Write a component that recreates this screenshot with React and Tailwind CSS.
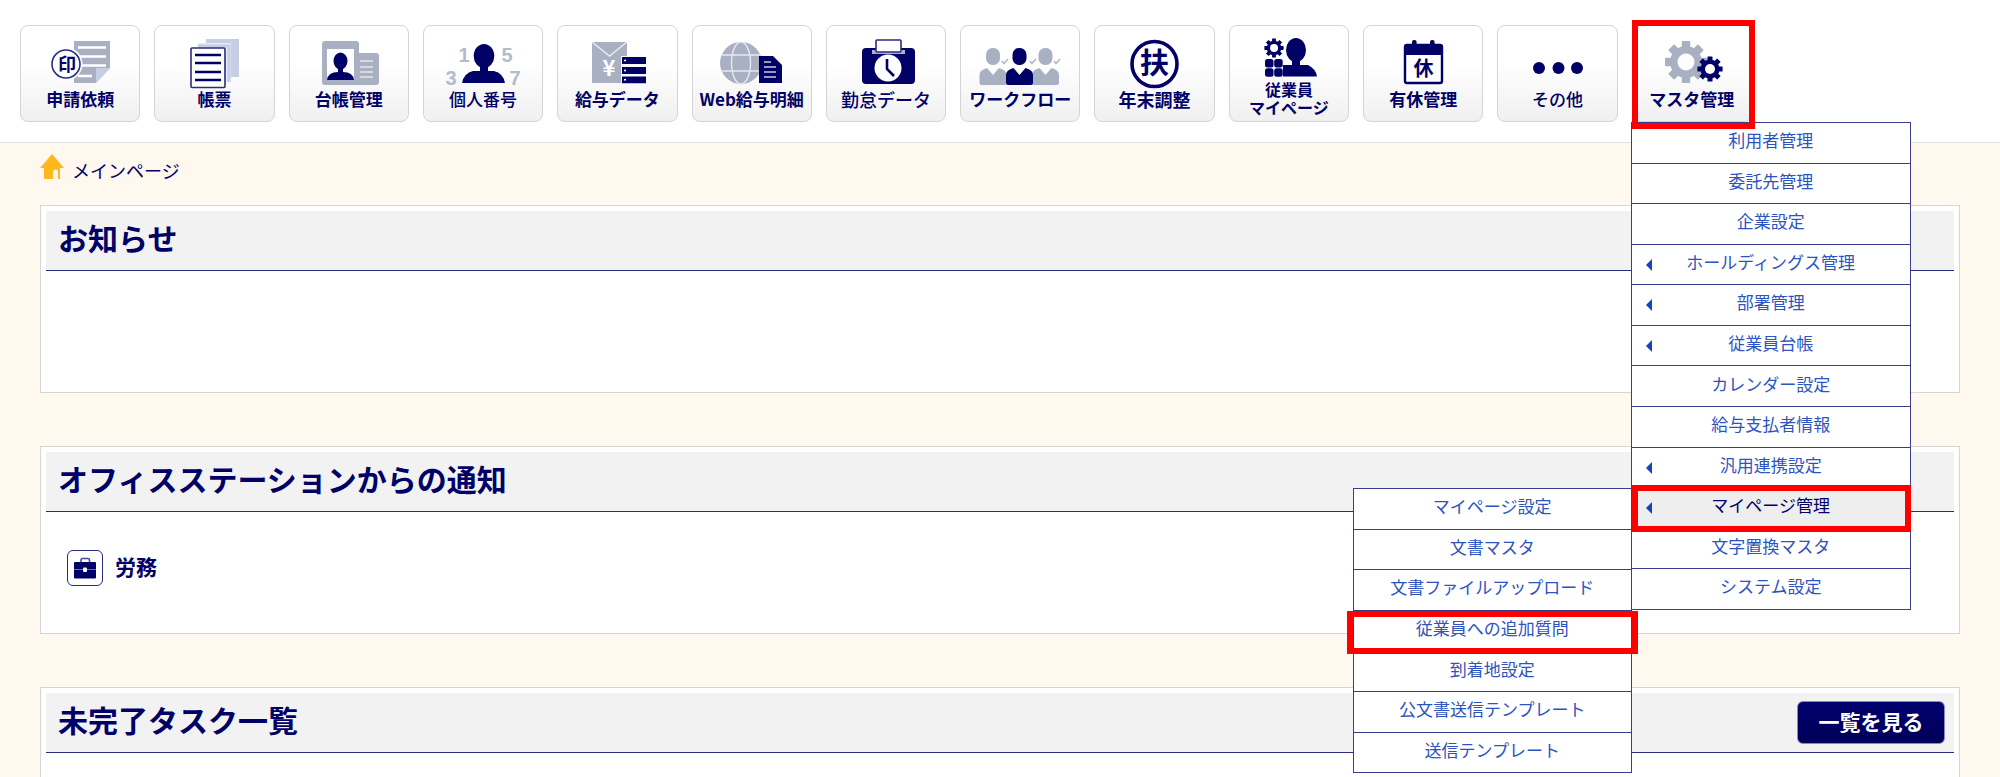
import React from 'react';

const NAVY = '#000066';
const GRAY = '#a8b0c2';
const LIGHT = '#c5cee3';

const Svg = ({ children }) => (
  <svg viewBox="0 0 118 62" className="w-[118px] h-[62px] shrink-0 overflow-visible" aria-hidden="true">
    {children}
  </svg>
);

const Gear = ({ cx, cy, r, hole, color }) => (
  <g transform={`translate(${cx} ${cy})`} fill={color}>
    {[0, 45, 90, 135].map((deg) => (
      <rect key={deg} x={-r * 0.2} y={-r} width={r * 0.4} height={r * 2} rx={r * 0.04} transform={`rotate(${deg})`} />
    ))}
    <circle r={r * 0.76} />
    <circle r={hole} fill="#fdfdfd" />
  </g>
);

const Glyph = ({ x, y, size, fill = NAVY, children }) => (
  <text x={x} y={y} fontSize={size} fill={fill} fontWeight="700" textAnchor="middle">
    {children}
  </text>
);

const RequestIcon = () => (
  <Svg>
    <path d="M53 15H89V42L75 57H53Z" fill={GRAY} />
    <path d="M75 42H89L75 57Z" fill={LIGHT} />
    <path d="M57 21.5H85M57 30.5H85M57 39.5H85M57 50H71" stroke="#fff" strokeWidth="2.6" />
    <circle cx="45" cy="38" r="16.5" fill="#fff" />
    <circle cx="45" cy="38" r="14" fill="#fff" stroke="#2b2b80" strokeWidth="1.6" />
    <Glyph x="46" y="45" size="18">印</Glyph>
  </Svg>
);

const FormIcon = () => (
  <Svg>
    <rect x="51" y="13" width="33" height="38" fill={LIGHT} />
    <rect x="43" y="17" width="33" height="39" fill="#e6ebf5" />
    <path d="M43 20H74V56" fill="none" stroke={LIGHT} strokeWidth="3" />
    <rect x="36" y="22" width="34" height="39.5" rx="1" fill="#fff" stroke="#2b2b80" strokeWidth="1.6" />
    <path d="M40 29H66M40 37H66M40 46H66M40 54H66" stroke={NAVY} strokeWidth="2.6" />
  </Svg>
);

const LedgerIcon = () => (
  <Svg>
    <path d="M35 15H66Q69 15 69 18V27H86Q89 27 89 30V56Q89 59 86 59H35Q32 59 32 56V18Q32 15 35 15Z" fill={GRAY} />
    <rect x="37" y="23" width="27" height="31" fill="#fff" />
    <ellipse cx="50.5" cy="35" rx="7" ry="8.6" fill={NAVY} />
    <path d="M48 41H53V46Q63 46 64 54H37Q38 46 48 46Z" fill={NAVY} />
    <path d="M70 35H83M70 41H83M70 46H83M70 51H83" stroke="#e3e6ed" strokeWidth="1.6" />
  </Svg>
);

const NumberIcon = () => (
  <Svg>
    <g className="font-['Liberation_Sans',sans-serif]">
      <Glyph x="40" y="36" size="20" fill="#b3bbcf">1</Glyph>
      <Glyph x="83" y="36" size="20" fill="#b3bbcf">5</Glyph>
      <Glyph x="27" y="59" size="20" fill="#b3bbcf">3</Glyph>
      <Glyph x="91" y="59" size="20" fill="#b3bbcf">7</Glyph>
    </g>
    <ellipse cx="60" cy="30" rx="10.3" ry="12" fill={NAVY} />
    <path d="M56 39H64V45H70Q79 47 81 57H38Q40 47 49 45H56Z" fill={NAVY} />
  </Svg>
);

const PayDataIcon = () => (
  <Svg>
    <rect x="34" y="16" width="35" height="41" fill={GRAY} />
    <path d="M34 16L51.5 30L69 16" fill="none" stroke="#eceef3" strokeWidth="1.4" />
    <Glyph x="51" y="50" size="22" fill="#fff">¥</Glyph>
    <rect x="63" y="30" width="26" height="28" fill="#fafafa" />
    <path d="M64 34.5H88M64 44.5H88M64 53.8H88" stroke={NAVY} strokeWidth="6.8" />
    <path d="M66 34.5H68M66 44.5H68M66 53.8H68" stroke="#fff" strokeWidth="1.6" />
  </Svg>
);

const WebPayIcon = () => (
  <Svg>
    <circle cx="48" cy="37" r="21" fill={GRAY} />
    <ellipse cx="48" cy="37" rx="9.5" ry="21" fill="none" stroke="#e6e8ee" strokeWidth="1.4" />
    <path d="M29 29H67M29 45H67" stroke="#e6e8ee" strokeWidth="1.4" />
    <path d="M66 30H80L89 39V57H66Z" fill={NAVY} />
    <path d="M71 36H78M71 41H83M71 46H83M71 51H83" stroke="#c9cbe2" strokeWidth="1.3" />
  </Svg>
);

const AttendanceIcon = () => (
  <Svg>
    <rect x="35" y="22" width="53" height="36" rx="4" fill={NAVY} />
    <rect x="45" y="24" width="33" height="4" fill="#a9b3c4" />
    <rect x="49" y="14" width="25" height="12" rx="1" fill="#fff" stroke="#2b2b80" strokeWidth="1.6" />
    <circle cx="61" cy="42" r="13.5" fill="#fff" />
    <path d="M60 33V43L67 50" fill="none" stroke={NAVY} strokeWidth="2.6" />
  </Svg>
);

const WorkflowPerson = ({ x, color }) => (
  <g transform={`translate(${x} 0)`} fill={color}>
    <rect x="-7" y="22" width="14" height="17" rx="6.5" />
    <path d="M-6 42L0 49L6 42Q13.5 44 13.5 49V57Q13.5 59 11.5 59H-11.5Q-13.5 59 -13.5 57V49Q-13.5 44 -6 42Z" />
  </g>
);

const WorkflowIcon = () => (
  <Svg>
    <WorkflowPerson x={32} color={GRAY} />
    <WorkflowPerson x={84.5} color={GRAY} />
    <WorkflowPerson x={58.5} color={NAVY} />
    <path d="M41 35L43 37.5L47 33M69 35L71 37.5L75 33M93 35L95 37.5L99 33" fill="none" stroke={GRAY} strokeWidth="1.3" />
  </Svg>
);

const YearEndIcon = () => (
  <Svg>
    <circle cx="58.5" cy="38" r="22.5" fill="#fff" stroke={NAVY} strokeWidth="3.6" />
    <Glyph x="58.5" y="48" size="29">扶</Glyph>
  </Svg>
);

const MyPageIcon = () => (
  <Svg>
    <Gear cx={44} cy={22} r={9.6} hole={4} color={NAVY} />
    <g fill={NAVY}>
      <rect x="35" y="33" width="8.5" height="8.5" rx="2.5" />
      <rect x="44.2" y="33" width="8.5" height="8.5" rx="2.5" />
      <rect x="35" y="42.2" width="8.5" height="8.5" rx="2.5" />
      <rect x="44.2" y="42.2" width="8.5" height="8.5" rx="2.5" />
      <ellipse cx="66" cy="24" rx="10" ry="12" />
      <path d="M62 33H70V39H78Q86 43 87 50.5H53V39H62Z" />
    </g>
  </Svg>
);

const HolidayIcon = () => (
  <Svg>
    <rect x="41" y="19" width="37" height="38" rx="2" fill="#fff" stroke={NAVY} strokeWidth="2.4" />
    <path d="M41 19H78V29H41Z" fill={NAVY} />
    <rect x="48" y="14" width="4.6" height="8" rx="2" fill={NAVY} />
    <rect x="66" y="14" width="4.6" height="8" rx="2" fill={NAVY} />
    <Glyph x="59.5" y="50" size="20">休</Glyph>
  </Svg>
);

const OtherIcon = () => (
  <Svg>
    <circle cx="40" cy="42" r="6" fill={NAVY} />
    <circle cx="59.5" cy="42" r="6" fill={NAVY} />
    <circle cx="78" cy="42" r="6" fill={NAVY} />
  </Svg>
);

const MasterIcon = () => (
  <Svg>
    <Gear cx={53} cy={36} r={21} hole={8.5} color={GRAY} />
    <Gear cx={77} cy={43} r={12.6} hole={5} color={NAVY} />
  </Svg>
);

const navItems = [
  { label: '申請依頼', icon: RequestIcon },
  { label: '帳票', icon: FormIcon },
  { label: '台帳管理', icon: LedgerIcon },
  { label: '個人番号', icon: NumberIcon, labelClass: 'text-[17px]/[22px] font-medium' },
  { label: '給与データ', icon: PayDataIcon },
  { label: 'Web給与明細', icon: WebPayIcon },
  { label: '勤怠データ', icon: AttendanceIcon, labelClass: 'text-lg/[22px] font-medium' },
  { label: 'ワークフロー', icon: WorkflowIcon },
  { label: '年末調整', icon: YearEndIcon, labelClass: 'text-lg/[22px] font-bold' },
  { label: '従業員\nマイページ', icon: MyPageIcon, labelClass: 'text-base/[18px] -mt-2 font-bold' },
  { label: '有休管理', icon: HolidayIcon },
  { label: 'その他', icon: OtherIcon, labelClass: 'text-[17px]/[22px] font-medium' },
  { label: 'マスタ管理', icon: MasterIcon, menu: true },
];

const masterMenu = [
  { label: '利用者管理' },
  { label: '委託先管理' },
  { label: '企業設定' },
  { label: 'ホールディングス管理', arrow: true },
  { label: '部署管理', arrow: true },
  { label: '従業員台帳', arrow: true },
  { label: 'カレンダー設定' },
  { label: '給与支払者情報' },
  { label: '汎用連携設定', arrow: true },
  { label: 'マイページ管理', arrow: true, active: true },
  { label: '文字置換マスタ' },
  { label: 'システム設定' },
];

const myPageMenu = [
  'マイページ設定',
  '文書マスタ',
  '文書ファイルアップロード',
  '従業員への追加質問',
  '到着地設定',
  '公文書送信テンプレート',
  '送信テンプレート',
];

const SubMenu = () => (
  <ul className="absolute top-0 right-full w-[279px] h-[285px] grid auto-rows-fr bg-white border border-b-0 border-[#3c3c8c]">
    {myPageMenu.map((label) => (
      <li key={label} className="relative border-b border-[#3c3c8c]">
        <a href="#" className="flex h-full items-center justify-center pb-1.5 text-[#2c54c0]">{label}</a>
        {label === '従業員への追加質問' && (
          <span className="absolute -inset-x-[7px] top-0 -bottom-[3px] z-10 border-[6px] border-[#ff0000] pointer-events-none" />
        )}
      </li>
    ))}
  </ul>
);

const MasterMenu = () => (
  <ul className="absolute top-full -left-px z-20 w-[280px] h-[488px] grid auto-rows-fr bg-white border border-b-0 border-[#3c3c8c] text-[17px]">
    {masterMenu.map((item) => (
      <li key={item.label} className={`relative border-b border-[#3c3c8c] ${item.active ? 'z-10 bg-[#eeeeee]' : 'bg-white'}`}>
        <a
          href="#"
          className={`flex h-full items-center justify-center pb-1.5 ${item.active ? 'text-[#000066]' : 'text-[#2c54c0]'}`}
        >
          {item.arrow && (
            <svg viewBox="0 0 6 12" className="absolute left-3.5 top-3.5 w-1.5 h-3" aria-hidden="true">
              <path d="M6 0V12L0 6Z" fill="#1443c0" />
            </svg>
          )}
          {item.label}
        </a>
        {item.active && (
          <>
            <SubMenu />
            <span className="absolute left-0 -right-px -top-[3px] -bottom-[4px] border-[6px] border-[#ff0000] pointer-events-none" />
          </>
        )}
      </li>
    ))}
  </ul>
);

const Panel = ({ title, action, children }) => (
  <section className="min-h-[188px] bg-white border border-[#d6d6d6] p-[5px]">
    <div className="h-[60px] flex items-center justify-between bg-[#f2f2f2] border-b border-[#2b2b80] pl-3 pr-[9px]">
      <h2 className="text-3xl font-bold pb-2">{title}</h2>
      {action}
    </div>
    {children}
  </section>
);

const App = () => {
  return (
    <div className="h-screen overflow-hidden bg-[#fff8ee] text-[#000066] font-['Noto_Sans_CJK_JP',sans-serif]">
      {/* Navigation */}
      <header className="bg-white border-b border-[#e2e2e2] pt-[25px] pb-5 pl-5">
        <nav>
          <ul className="grid grid-cols-13 gap-3.5 max-w-[1732px]">
            {navItems.map((item) => {
              const Icon = item.icon;
              return (
                <li key={item.label} className="relative">
                  <button className="w-full h-[97px] flex flex-col items-center border border-[#d4d4d4] rounded-lg bg-linear-to-b from-white from-40% to-[#f0f0f0]">
                    <Icon />
                    <span className={`whitespace-pre ${item.labelClass || 'text-[17px]/[22px] font-bold'}`}>{item.label}</span>
                  </button>
                  {item.menu && (
                    <>
                      <MasterMenu />
                      <span className="absolute left-0 -right-[3px] -top-[5px] -bottom-[7px] z-30 border-[6px] border-[#ff0000] pointer-events-none" />
                    </>
                  )}
                </li>
              );
            })}
          </ul>
        </nav>
      </header>

      <main className="px-10">
        {/* Breadcrumb */}
        <div className="h-[62px] flex items-start gap-2 pt-[11px]">
          <svg viewBox="0 0 24 25" className="w-6 h-[25px]" aria-hidden="true">
            <path d="M12 0L24 14H20V25H18V18Q18 15.5 15.7 15.5Q13 15.5 13 18V25H4V14H0Z" fill="#ffb81c" />
          </svg>
          <a href="#" className="text-lg/8">メインページ</a>
        </div>

        <div className="space-y-[53px]">
          <Panel title="お知らせ" />

          <Panel title="オフィスステーションからの通知">
            <div className="flex items-center gap-3 pl-[21px] pt-[38px]">
              <span className="w-9 h-9 flex items-center justify-center border border-[#2b2b80] rounded-md">
                <svg viewBox="0 0 24 22" className="w-6 h-[22px]" aria-hidden="true">
                  <path d="M8 6V3Q8 1.5 9.5 1.5H15Q16.5 1.5 16.5 3V6" fill="none" stroke="#4a4a94" strokeWidth="1.6" />
                  <rect x="1" y="5" width="22" height="16.5" rx="1" fill={NAVY} />
                  <path d="M1 12.5H23" stroke="#6c6cab" strokeWidth="1" />
                  <rect x="10" y="10.5" width="4" height="4.5" rx="1" fill="#fff" />
                </svg>
              </span>
              <span className="text-[21px] font-bold pb-0.5">労務</span>
            </div>
          </Panel>

          <Panel
            title="未完了タスク一覧"
            action={
              <button className="w-[148px] h-[43px] pb-0.5 rounded-md border border-[#8a8ab8] bg-linear-to-b from-[#00006e] to-[#000058] text-white text-[21px] font-bold">
                一覧を見る
              </button>
            }
          />
        </div>
      </main>
    </div>
  );
};

export default App;
